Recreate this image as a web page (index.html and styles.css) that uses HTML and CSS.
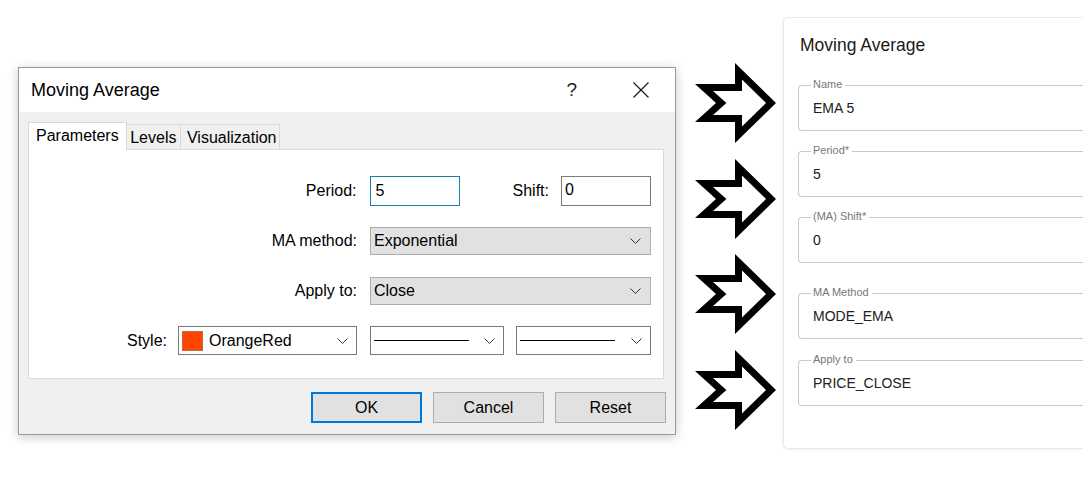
FILE: index.html
```html
<!DOCTYPE html>
<html>
<head>
<meta charset="utf-8">
<link rel="stylesheet" href="styles.css">
</head>
<body>
<div class="page">
  <div class="dialog">
    <div class="titlebar">
      <span class="title">Moving Average</span>
      <span class="help">?</span>
      <svg class="close" width="16" height="16" viewBox="0 0 16 16"><path d="M0.5 0.5 L15.5 15.5 M15.5 0.5 L0.5 15.5" stroke="#111" stroke-width="1.1" fill="none"/></svg>
    </div>
    <div class="dbody">
      <div class="tabs">
        <div class="tab active">Parameters</div>
        <div class="tab tab-levels">Levels</div>
        <div class="tab tab-vis">Visualization</div>
      </div>
      <div class="panel">
        <div class="row">
          <span class="lbl">Period:</span>
          <div class="input focus w90">5</div>
          <span class="lbl shift-lbl">Shift:</span>
          <div class="input w90 shift-input">0</div>
        </div>
        <div class="row">
          <span class="lbl">MA method:</span>
          <div class="combo grey w281"><span class="ctext">Exponential</span><svg class="chev" width="11" height="6" viewBox="0 0 11 6"><polyline points="0.5,0.5 5.5,5.5 10.5,0.5" fill="none" stroke="#333" stroke-width="1"/></svg></div>
        </div>
        <div class="row">
          <span class="lbl">Apply to:</span>
          <div class="combo grey w281"><span class="ctext">Close</span><svg class="chev" width="11" height="6" viewBox="0 0 11 6"><polyline points="0.5,0.5 5.5,5.5 10.5,0.5" fill="none" stroke="#333" stroke-width="1"/></svg></div>
        </div>
        <div class="row">
          <span class="lbl style-lbl">Style:</span>
          <div class="combo white w179"><span class="swatch"></span><span class="ctext color-text">OrangeRed</span><svg class="chev" width="11" height="6" viewBox="0 0 11 6"><polyline points="0.5,0.5 5.5,5.5 10.5,0.5" fill="none" stroke="#333" stroke-width="1"/></svg></div>
          <div class="combo white w134 sel2"><span class="line"></span><svg class="chev" width="11" height="6" viewBox="0 0 11 6"><polyline points="0.5,0.5 5.5,5.5 10.5,0.5" fill="none" stroke="#333" stroke-width="1"/></svg></div>
          <div class="combo white w135 sel3"><span class="line"></span><svg class="chev" width="11" height="6" viewBox="0 0 11 6"><polyline points="0.5,0.5 5.5,5.5 10.5,0.5" fill="none" stroke="#333" stroke-width="1"/></svg></div>
        </div>
      </div>
      <div class="buttons">
        <div class="btn default">OK</div>
        <div class="btn">Cancel</div>
        <div class="btn">Reset</div>
      </div>
    </div>
  </div>

  <div class="arrows">
    <svg class="arrow" width="86" height="86" viewBox="0 0 86 86"><path fill-rule="evenodd" fill="#000" d="M3 24 H43 V3 L84 43 L43 83 V62 H3 L24 43 Z M21 31 L34.4 43 L21 55 H50 V66.4 L74 43 L50 19.6 V31 Z"/></svg>
    <svg class="arrow" width="86" height="86" viewBox="0 0 86 86"><path fill-rule="evenodd" fill="#000" d="M3 24 H43 V3 L84 43 L43 83 V62 H3 L24 43 Z M21 31 L34.4 43 L21 55 H50 V66.4 L74 43 L50 19.6 V31 Z"/></svg>
    <svg class="arrow" width="86" height="86" viewBox="0 0 86 86"><path fill-rule="evenodd" fill="#000" d="M3 24 H43 V3 L84 43 L43 83 V62 H3 L24 43 Z M21 31 L34.4 43 L21 55 H50 V66.4 L74 43 L50 19.6 V31 Z"/></svg>
    <svg class="arrow" width="86" height="86" viewBox="0 0 86 86"><path fill-rule="evenodd" fill="#000" d="M3 24 H43 V3 L84 43 L43 83 V62 H3 L24 43 Z M21 31 L34.4 43 L21 55 H50 V66.4 L74 43 L50 19.6 V31 Z"/></svg>
  </div>

  <div class="card">
    <div class="card-title">Moving Average</div>
    <div class="field"><span class="flabel">Name</span><span class="fvalue">EMA 5</span></div>
    <div class="field"><span class="flabel">Period*</span><span class="fvalue">5</span></div>
    <div class="field"><span class="flabel">(MA) Shift*</span><span class="fvalue">0</span></div>
    <div class="field field-gap"><span class="flabel">MA Method</span><span class="fvalue">MODE_EMA</span></div>
    <div class="field field-last"><span class="flabel">Apply to</span><span class="fvalue">PRICE_CLOSE</span></div>
  </div>
</div>
</body>
</html>
```

FILE: styles.css
```css
* { box-sizing: border-box; }
html, body {
  margin: 0;
  padding: 0;
  background: #ffffff;
  width: 1083px;
  height: 503px;
  overflow: hidden;
  font-family: "Liberation Sans", Arial, sans-serif;
  color: #000;
}
.page {
  display: flex;
  align-items: flex-start;
  width: 1083px;
}

/* ---------- Windows dialog ---------- */
.dialog {
  flex-shrink: 0;
  margin-top: 67px;
  margin-left: 18px;
  width: 658px;
  height: 368px;
  border: 1px solid #9a9a9a;
  background: #f0f0f0;
  box-shadow: 0 2px 10px rgba(0,0,0,0.22);
  display: flex;
  flex-direction: column;
}
.titlebar {
  height: 44px;
  background: #ffffff;
  display: flex;
  align-items: center;
  padding: 0 26px 0 12px;
}
.title {
  font-size: 18px;
  color: #000;
}
.help {
  margin-left: auto;
  font-size: 19px;
  color: #222;
  margin-right: 56px;
  margin-top: -1px;
}
.close { display: block; margin-top: -1px; }

.dbody {
  flex: 1;
  padding: 10px 9px 11px 9px;
  display: flex;
  flex-direction: column;
}
.tabs {
  display: flex;
  align-items: flex-end;
  height: 27px;
}
.tab {
  font-size: 16px;
  line-height: 18px;
  height: 25px;
  padding: 3.5px 4px 0 3.5px;
  border: 1px solid #d9d9d9;
  border-left: none;
  border-bottom: none;
  background: #f0f0f0;
}
.tab.active {
  position: relative;
  z-index: 1;
  height: 28px;
  margin-bottom: -1px;
  background: #ffffff;
  border-left: 1px solid #d9d9d9;
  padding: 3.5px 7px 0 7px;
}
.tab-vis { padding-left: 5.5px; padding-right: 2px; }

.panel {
  height: 230px;
  margin-right: 2px;
  background: #ffffff;
  border: 1px solid #d9d9d9;
  padding: 26px 12px 23px 0;
  display: flex;
  flex-direction: column;
  gap: 21px;
}
.row {
  height: 29px;
  display: flex;
  align-items: center;
  justify-content: flex-end;
  font-size: 16px;
}
.lbl { margin-right: 13px; white-space: nowrap; }
.shift-lbl { margin-left: 53px; margin-right: 12px; }
.style-lbl { margin-right: 11px; }

.input {
  height: 30px;
  border: 1px solid #7a7a7a;
  background: #fff;
  display: flex;
  align-items: center;
  padding-left: 5px;
  font-size: 16px;
}
.input.focus { border-color: #1a7fa6; }
.shift-input { padding-left: 3px; padding-bottom: 2px; }
.w90 { width: 90px; }
.w281 { width: 281px; }
.w179 { width: 179px; }
.w134 { width: 134px; }
.w135 { width: 135px; }

.combo {
  height: 28px;
  display: flex;
  align-items: center;
  border: 1px solid #adadad;
  padding: 0 9px 0 3px;
}
.combo.grey { background: #e1e1e1; }
.combo.white { background: #ffffff; border-color: #7a7a7a; height: 29px; padding: 0 8px 0 3px; }
.ctext { white-space: nowrap; }
.chev { display: block; margin-left: auto; flex-shrink: 0; }
.swatch {
  width: 21px;
  height: 20px;
  background: #ff4500;
  border: 1px solid #b8694c;
  margin-right: 6px;
  flex-shrink: 0;
}
.sel2 { margin-left: 13px; padding-left: 6px; padding-right: 6px; }
.sel3 { margin-left: 12px; padding-left: 6px; padding-right: 8px; }
.line {
  display: block;
  width: 95px;
  height: 1px;
  background: #000;
}

.buttons {
  margin-top: 13px;
  display: flex;
  justify-content: flex-end;
  gap: 11px;
}
.btn {
  width: 111px;
  height: 31px;
  background: #e1e1e1;
  border: 1px solid #adadad;
  display: flex;
  align-items: center;
  justify-content: center;
  font-size: 16px;
}
.btn.default { border: 2px solid #0078d7; }

/* ---------- arrows ---------- */
.arrows {
  flex-shrink: 0;
  margin-top: 60px;
  margin-left: 16px;
  display: flex;
  flex-direction: column;
  gap: 9.5px;
}
.arrow { display: block; }

/* ---------- web card (continues past the right edge of the frame) ---------- */
.card {
  flex-shrink: 0;
  margin-top: 17px;
  margin-left: 5px;
  width: 300px;
  background: #ffffff;
  border: 1px solid #e8e8e8;
  border-right: none;
  border-radius: 5px 0 0 5px;
  box-shadow: -1px 1px 3px rgba(0,0,0,0.05);
  padding: 17px 0 42px 14px;
}
.card-title {
  font-size: 17.5px;
  line-height: 20px;
  color: #1a1a1a;
  padding-left: 2px;
  margin-bottom: 30px;
}
.field {
  position: relative;
  height: 46px;
  border: 1px solid #c8c8c8;
  border-right: none;
  border-radius: 4px 0 0 4px;
  display: flex;
  align-items: center;
  padding-left: 14px;
  margin-top: 20px;
}
.card-title + .field { margin-top: 0; }
.field-gap { margin-top: 30px; }
.field-last { margin-top: 21px; }
.flabel {
  position: absolute;
  top: -8px;
  left: 12px;
  padding: 0 3px 0 2px;
  background: #ffffff;
  font-size: 11px;
  line-height: 13px;
  color: #777;
  white-space: nowrap;
}
.fvalue {
  font-size: 14px;
  color: #212121;
}
```
